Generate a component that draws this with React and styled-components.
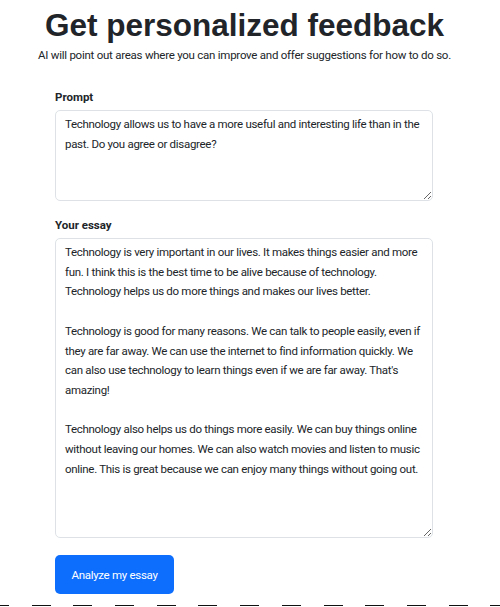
import React from "react";
import styled, { createGlobalStyle } from "styled-components";

const GlobalStyle = createGlobalStyle`
  html, body {
    margin: 0;
    padding: 0;
    background: #ffffff;
  }
  body {
    font-family: Roboto, "Liberation Sans", Arial, sans-serif;
    color: #212529;
    overflow: hidden;
  }
`;

const prompt =
  "Technology allows us to have a more useful and interesting life than in the past. Do you agree or disagree?";

const essay = `Technology is very important in our lives. It makes things easier and more fun. I think this is the best time to be alive because of technology. Technology helps us do more things and makes our lives better.

Technology is good for many reasons. We can talk to people easily, even if they are far away. We can use the internet to find information quickly. We can also use technology to learn things even if we are far away. That's amazing!

Technology also helps us do things more easily. We can buy things online without leaving our homes. We can also watch movies and listen to music online. This is great because we can enjoy many things without going out.`;

function App() {
  return (
    <>
      <GlobalStyle />
      <Page>
        <Header>
          <Title>Get personalized feedback</Title>
          <Subtitle>
            AI will point out areas where you can improve and offer suggestions
            for how to do so.
          </Subtitle>
        </Header>
        <Form>
          <Field>
            <Label>Prompt</Label>
            <TextArea height="91px" defaultValue={prompt} />
          </Field>
          <Field>
            <Label>Your essay</Label>
            <TextArea height="300px" defaultValue={essay} />
          </Field>
          <Button type="button">Analyze my essay</Button>
        </Form>
        <Divider />
      </Page>
    </>
  );
}

const Page = styled.div`
  width: 500px;
  height: 607px;
  display: flex;
  flex-direction: column;
`;

const Header = styled.div`
  display: flex;
  flex-direction: column;
  align-items: center;
  padding: 6px 11px 0 0;
`;

const Title = styled.h1`
  margin: 0;
  font-family: "Liberation Sans", Arial, sans-serif;
  font-size: 31.5px;
  line-height: 38px;
  font-weight: 700;
`;

const Subtitle = styled.p`
  margin: 3px 0 0;
  font-size: 11.5px;
  line-height: 16px;
  letter-spacing: -0.25px;
`;

const Form = styled.div`
  display: flex;
  flex-direction: column;
  gap: 18px;
  padding: 28px 0 0 55px;
  width: 378px;
`;

const Field = styled.div`
  display: flex;
  flex-direction: column;
  gap: 6px;
`;

const Label = styled.label`
  font-size: 11.5px;
  line-height: 13px;
  font-weight: 700;
`;

const TextArea = styled.textarea`
  box-sizing: border-box;
  width: 378px;
  height: ${(p) => p.height};
  margin: 0;
  padding: 4px 8px 4px 9px;
  border: 1px solid #dee2e6;
  border-radius: 5px;
  font-family: Roboto, "Liberation Sans", Arial, sans-serif;
  font-size: 11.5px;
  line-height: 19.7px;
  letter-spacing: -0.3px;
  color: #212529;
  background: #ffffff;
  outline: none;
  resize: vertical;
  overflow: hidden;
`;

const Button = styled.button`
  align-self: flex-start;
  margin-top: -1px;
  width: 119px;
  height: 39px;
  padding: 0;
  border: none;
  border-radius: 5px;
  background: #0d6efd;
  color: #ffffff;
  font-family: Roboto, "Liberation Sans", Arial, sans-serif;
  font-size: 11.5px;
  letter-spacing: -0.3px;
`;

const Divider = styled.div`
  margin-top: auto;
  margin-bottom: 1px;
  height: 1px;
  background: repeating-linear-gradient(
    to right,
    #111111 0,
    #111111 19px,
    transparent 19px,
    transparent 41.7px
  );
  background-position: -10px 0;
`;

export default App;
